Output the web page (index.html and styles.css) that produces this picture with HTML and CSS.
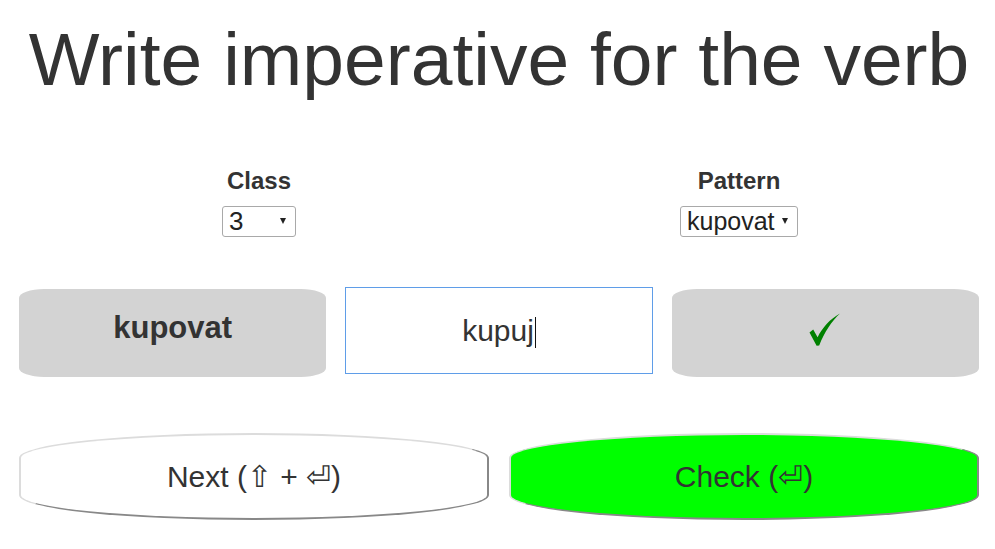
FILE: index.html
```html
<!DOCTYPE html>
<html lang="en">
<head>
<meta charset="utf-8">
<title>Imperative drill</title>
<link rel="stylesheet" href="styles.css">
</head>
<body>
<div class="page">
  <h1 class="title">Write imperative for the verb</h1>
  <div class="options">
    <div class="option">
      <div class="label">Class</div>
      <span class="select select-class"><select><option>3</option></select></span>
    </div>
    <div class="option">
      <div class="label">Pattern</div>
      <span class="select select-pattern"><select><option>kupovat</option></select></span>
    </div>
  </div>
  <div class="exercise">
    <div class="box verb">kupovat</div>
    <div class="answer" role="textbox">kupuj<span class="caret"></span></div>
    <div class="box result">
      <svg class="tick" width="32" height="34" viewBox="0 0 32 34">
        <path d="M0.5 19.5 L4.2 16.6 L8.6 24.2 C13.5 14.5 21 6 31 0.5 C22.5 8.5 15.5 19 10.2 32.5 L7.6 32.8 Z" fill="#008000"/>
      </svg>
    </div>
  </div>
  <div class="actions">
    <button class="btn next">Next (⇧ + ⏎)</button>
    <button class="btn check">Check (⏎)</button>
  </div>
</div>
</body>
</html>
```

FILE: styles.css
```css
html, body {
  margin: 0;
  padding: 0;
  background: #fff;
}

body {
  font-family: "Liberation Sans", Arial, sans-serif;
  color: #333;
}

.page {
  padding: 16px 16px 0 19px;
}

.title {
  margin: 0;
  font-size: 75px;
  font-weight: normal;
  line-height: 86px;
  text-align: center;
}

.options {
  display: grid;
  grid-template-columns: 1fr 1fr;
  margin-top: 65px;
}

.option {
  display: flex;
  flex-direction: column;
  align-items: center;
}

.label {
  font-size: 24px;
  font-weight: bold;
  line-height: 28px;
}

.select {
  position: relative;
  display: inline-block;
  margin-top: 11px;
  height: 31px;
}

.select select {
  -webkit-appearance: none;
  appearance: none;
  box-sizing: border-box;
  height: 31px;
  margin: 0;
  padding: 0 0 0 6px;
  border: 1px solid #a9a9a9;
  border-radius: 3px;
  background: #fff;
  color: #222;
  font-family: "Liberation Sans", Arial, sans-serif;
  font-size: 26px;
  line-height: 29px;
}

.select-class select {
  width: 74px;
}

.select-pattern select {
  width: 118px;
  font-size: 25px;
}

.select::after {
  content: "";
  position: absolute;
  right: 10px;
  top: 12px;
  border-left: 3.5px solid transparent;
  border-right: 3.5px solid transparent;
  border-top: 6px solid #222;
  pointer-events: none;
}

.exercise {
  display: grid;
  grid-template-columns: 1fr 1fr 1fr;
  column-gap: 19px;
  align-items: start;
  margin-top: 50px;
}

.box {
  box-sizing: border-box;
  height: 88px;
  margin-top: 2px;
  background: #d3d3d3;
  border-radius: 25px / 9px;
  text-align: center;
}

.verb {
  padding-top: 21px;
  font-size: 31px;
  font-weight: bold;
  line-height: 36px;
}

.answer {
  box-sizing: border-box;
  height: 87px;
  border: 1px solid #5f9de8;
  display: flex;
  align-items: center;
  justify-content: center;
  font-size: 30px;
  color: #333;
}

.caret {
  display: inline-block;
  width: 1px;
  height: 31px;
  margin-left: 1px;
  background: #111;
  transform: translateY(2px);
}

.result {
  display: flex;
  align-items: center;
  justify-content: center;
}

.tick {
  display: block;
  margin-top: -6px;
}

.actions {
  display: grid;
  grid-template-columns: 1fr 1fr;
  column-gap: 20px;
  margin-top: 56px;
}

.btn {
  box-sizing: border-box;
  height: 87px;
  margin: 0;
  padding: 0;
  border: 2px solid;
  border-color: #dcdcdc #888 #888 #dcdcdc;
  border-radius: 50% / 25px;
  background: #fff;
  color: #333;
  font-family: "Liberation Sans", Arial, sans-serif;
  font-size: 30px;
  cursor: pointer;
}

.check {
  background: #00ff00;
}
```
